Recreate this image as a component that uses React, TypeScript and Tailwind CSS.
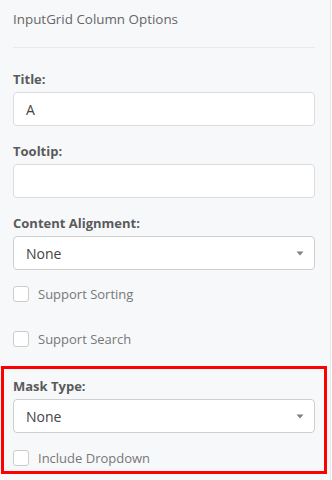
const font = { fontFamily: '"Open Sans", "Liberation Sans", sans-serif' };

function Label({ children }: { children: React.ReactNode }) {
  return <div className="text-[13px] leading-[18px] font-bold text-[#5a5a5a]">{children}</div>;
}

function TextInput({ value }: { value?: string }) {
  return (
    <div className="mt-[4px] h-[34px] rounded-[4px] border border-[#dcdcdc] bg-white pl-[12px] flex items-center text-[14px] text-[#444]">
      {value}
    </div>
  );
}

function Select({ value }: { value: string }) {
  return (
    <div className="mt-[4px] h-[34px] rounded-[4px] border border-[#cfcfcf] bg-white pl-[12px] pr-[8px] flex items-center justify-between text-[14px] text-[#444]">
      <span>{value}</span>
      <svg width="8" height="5" viewBox="0 0 8 5" className="mr-[2px]">
        <path d="M0.5 0.5 H7.5 L4 4.5 Z" fill="#808080" />
      </svg>
    </div>
  );
}

function Checkbox({ label }: { label: string }) {
  return (
    <div className="flex items-center h-[16px] gap-[9px]">
      <div className="w-[16px] h-[16px] rounded-[3px] border border-[#cccccc] bg-white shrink-0" />
      <span className="text-[13px] text-[#777] mt-[2px]">{label}</span>
    </div>
  );
}

export default function App() {
  return (
    <div style={font} className="w-[331px] min-h-[480px] bg-[#f7f8fa] border-r border-[#e5e7ea]">
      <div className="ml-[13px] w-[302px]">
        {/* Header */}
        <div className="h-[48px] border-b border-[#e8e9ec] pt-[10px]">
          <div className="text-[13.4px] leading-[18px] text-[#666]">InputGrid Column Options</div>
        </div>

        <div className="mt-[22px]">
          <Label>Title:</Label>
          <TextInput value="A" />
        </div>

        <div className="mt-[16px]">
          <Label>Tooltip:</Label>
          <TextInput />
        </div>

        <div className="mt-[16px]">
          <Label>Content Alignment:</Label>
          <Select value="None" />
        </div>

        <div className="mt-[16px]">
          <Checkbox label="Support Sorting" />
        </div>
        <div className="mt-[29px]">
          <Checkbox label="Support Search" />
        </div>

        {/* Highlighted section */}
        <div className="mt-[19px] -ml-[12px] w-[326px] border-[3px] border-[#ff0000] px-[9px] pt-[8px] pb-[5px]">
          <Label>Mask Type:</Label>
          <Select value="None" />
          <div className="mt-[17px]">
            <Checkbox label="Include Dropdown" />
          </div>
        </div>
      </div>
    </div>
  );
}
